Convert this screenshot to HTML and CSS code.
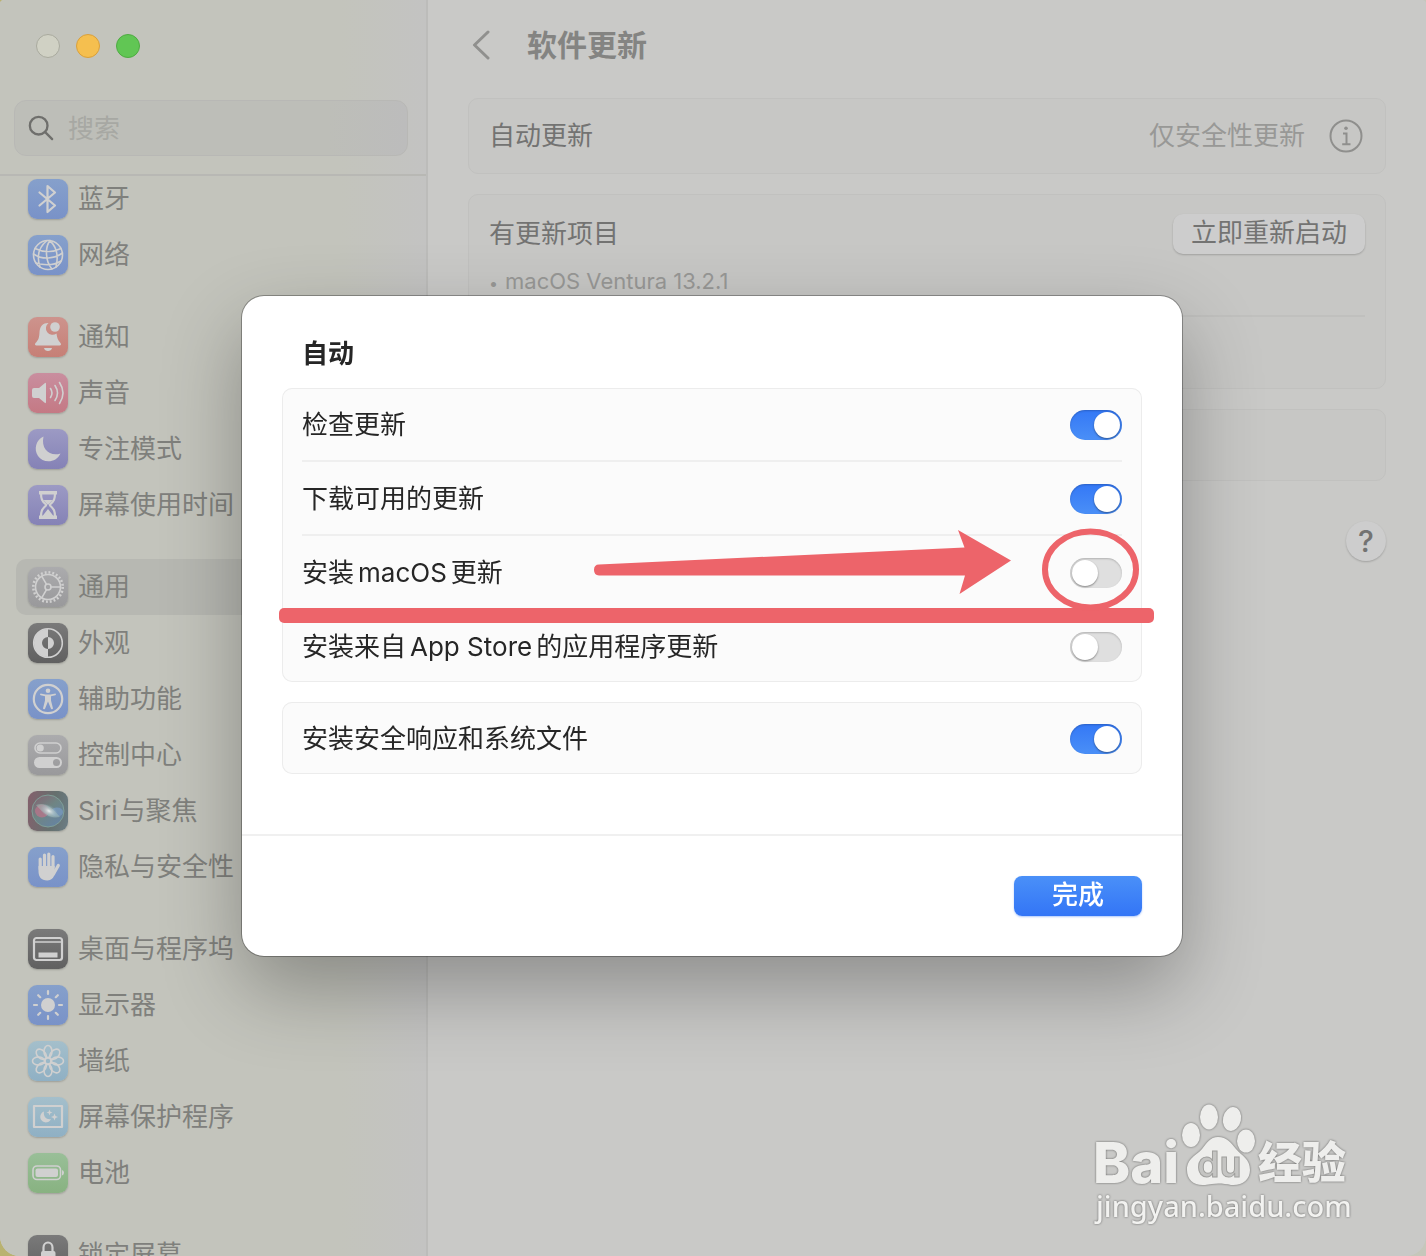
FILE: index.html
```html
<!DOCTYPE html>
<html lang="zh-CN">
<head>
<meta charset="utf-8">
<meta name="viewport" content="width=device-width, initial-scale=1">
<title>软件更新</title>
<link rel="stylesheet" href="styles.css">
</head>
<body>
<div class="window">
  <aside class="sidebar">
    <div class="sidebar-top">
      <div class="lights">
        <button class="light light-close" type="button" aria-label="关闭"></button>
        <button class="light light-min" type="button" aria-label="最小化"></button>
        <button class="light light-zoom" type="button" aria-label="缩放"></button>
      </div>
      <label class="search">
        <svg class="search-icon" viewBox="0 0 28 28" aria-hidden="true"><circle cx="11.500" cy="11.500" r="9.500"/><path d="M18.500 18.500 26 26"/></svg>
        <input type="search" placeholder="搜索" aria-label="搜索">
      </label>
    </div>
    <nav class="nav">
      <ul class="group">
        <li><a class="item" href="#"><svg class="icon blue" viewBox="0 0 40 40"><path class="line" d="M11.500 13.500 27 26.500 19.500 33V7L27 13.500 11.500 26.500"/></svg>蓝牙</a></li>
        <li><a class="item" href="#"><svg class="icon blue" viewBox="0 0 40 40"><g class="line thin"><circle cx="20" cy="20" r="14.500"/><path d="M22 5.500C17 12 17 26 24 34M21 5.500C28 10 31 20 28 32M19 5.500C11 12 8 20 12 32M7 13.500c8 4 18 4 26 0M5.500 19c9 6 21 5 29-1M8 28c7 2 17 3 25-2"/></g></svg>网络</a></li>
      </ul>
      <ul class="group">
        <li><a class="item" href="#"><svg class="icon red" viewBox="0 0 40 40"><path class="fill" d="M20 6c-5 0-8 3-8.500 9-.3 6-1 8-4 11-1 1.500-.5 2.500 1 2.500h23c1.500 0 2-1 1-2.500-2.500-2.500-3.500-5-4-9.500A6.500 6.500 0 0 1 20.500 6zM16 31h8c-.5 4-7.500 4-8 0z"/><circle class="fill" cx="27" cy="10" r="4.800"/></svg>通知</a></li>
        <li><a class="item" href="#"><svg class="icon pink" viewBox="0 0 40 40"><path class="fill" d="M4 17q0-2 2-2h5l6-5q1-.6 1 1v18q0 1.600-1 1l-6-5H6q-2 0-2-2z"/><path class="line thin" d="M22.500 15.500q3 4.500 0 9M27 12.500q5 7.500 0 15M31.500 9.500q7 10.500 0 21"/></svg>声音</a></li>
        <li><a class="item" href="#"><svg class="icon purple" viewBox="0 0 40 40"><path class="fill" d="M15.500 7.500C8 11 5.500 20 10 27c5 7.500 18 7.500 22.500-2.500-10 3.500-20-4-17-17z"/></svg>专注模式</a></li>
        <li><a class="item" href="#"><svg class="icon purple" viewBox="0 0 40 40"><path class="line" d="M13 8h14c0 6-1 8-5 11.500v1C26 24 27 26 27 32H13c0-6 1-8 5-11.500v-1C14 16 13 14 13 8z"/><path class="fill" d="M11 6h18v3.500H11zM11 30.500h18V34H11zM15.500 15h9L20 20zM20 24l5.500 7h-11z"/></svg>屏幕使用时间</a></li>
      </ul>
      <ul class="group">
        <li><a class="item selected" href="#" aria-current="page"><svg class="icon gray" viewBox="0 0 40 40"><circle class="teeth" cx="20" cy="20" r="14.700"/><g class="line thin"><circle cx="20" cy="20" r="12.500"/><circle cx="20" cy="20" r="3"/><path d="M23 20h9.500M18.500 17.400 13.700 9.200M18.500 22.600l-4.800 8.200"/></g></svg>通用</a></li>
        <li><a class="item" href="#"><svg class="icon dark" viewBox="0 0 40 40"><circle class="line thin" cx="20" cy="20" r="14.300"/><path class="fill" d="M20 6a14 14 0 0 0 0 28v-8a6 6 0 0 1 0-12zM20 14a6 6 0 0 1 0 12z"/></svg>外观</a></li>
        <li><a class="item" href="#"><svg class="icon blue" viewBox="0 0 40 40"><circle class="line" cx="20" cy="20" r="14.200"/><circle class="fill" cx="20" cy="11.800" r="2.300"/><path class="fill" d="m12.500 14.500 5 .9h5l5-.9q1.200 1.200-.2 1.800l-4.300 1v4.200l2 8q-.7 1.500-2 .2L20 22.500l-3 7.200q-1.300 1.300-2-.2l2-8v-4.200l-4.300-1q-1.400-.6-.2-1.800z"/></svg>辅助功能</a></li>
        <li><a class="item" href="#"><svg class="icon gray" viewBox="0 0 40 40"><rect class="line thin" x="7" y="8" width="26" height="10" rx="5"/><circle class="fill" cx="12.200" cy="13" r="3.600"/><path class="fill" fill-rule="evenodd" d="M11.500 22h17a5.500 5.500 0 0 1 0 11h-17a5.500 5.500 0 0 1 0-11zm17 2a3.500 3.500 0 1 0 0 7 3.500 3.500 0 0 0 0-7z"/></svg>控制中心</a></li>
        <li><a class="item" href="#"><svg class="icon siri" viewBox="0 0 40 40">
          <defs>
            <radialGradient id="glow"><stop offset="0" stop-color="#e8eef0"/><stop offset=".4" stop-color="#c8d4d8" stop-opacity=".6"/><stop offset="1" stop-color="#8fb4c4" stop-opacity="0"/></radialGradient>
            <linearGradient id="orb" x2=".8" y2="1"><stop offset="0" stop-color="#86606f"/><stop offset=".5" stop-color="#6f8584"/><stop offset="1" stop-color="#6583a3"/></linearGradient>
          </defs>
          <circle cx="20" cy="20" r="16" fill="url(#orb)" stroke="#7f9e97"/>
          <ellipse cx="14" cy="20" rx="7" ry="6.500" fill="#b5748a" opacity=".8"/>
          <ellipse cx="29" cy="21" rx="6" ry="4.500" fill="#7799bd" opacity=".8"/>
          <path d="M8 14c8-3 15 1 24 12-10 2-16-3-24-12z" fill="#a3bdb8" opacity=".5"/>
          <ellipse cx="21" cy="20" rx="10" ry="6" fill="url(#glow)" transform="rotate(30 21 20)"/></svg><span><span class="latin-start">Siri</span>与聚焦</span></a></li>
        <li><a class="item" href="#"><svg class="icon blue" viewBox="0 0 40 40"><path class="fingers" d="M12.200 22V12M16.500 20V8M20.800 20V7M25 20V9.500M25.500 27l4.800-8.500"/><path class="fill" d="M10.500 19h16.200v5l1.500-1c-2 7-4 10.500-9 10.500-6 0-8.700-4-8.700-9z"/></svg>隐私与安全性</a></li>
      </ul>
      <ul class="group">
        <li><a class="item" href="#"><svg class="icon dark" viewBox="0 0 40 40"><rect class="line" x="6" y="9" width="28" height="22" rx="2.500"/><path class="line thin" d="M7 13h26"/><path class="fill" d="M10.500 23.500h19v5h-19z"/></svg>桌面与程序坞</a></li>
        <li><a class="item" href="#"><svg class="icon blue" viewBox="0 0 40 40"><circle class="fill" cx="20" cy="20" r="7"/><path class="line" d="M20 6v3M20 31v3M6 20h3M31 20h3M10.200 10.200l2 2M27.800 27.800l2 2M10.200 29.800l2-2M27.800 12.200l2-2"/></svg>显示器</a></li>
        <li><a class="item" href="#"><svg class="icon sky" viewBox="0 0 40 40"><defs><g id="petals"><ellipse cx="20" cy="10.500" rx="4" ry="6"/><ellipse cx="20" cy="29.500" rx="4" ry="6"/></g></defs><g class="line thin"><use href="#petals"/><use href="#petals" transform="rotate(45 20 20)"/><use href="#petals" transform="rotate(90 20 20)"/><use href="#petals" transform="rotate(135 20 20)"/><circle cx="20" cy="20" r="3"/></g></svg>墙纸</a></li>
        <li><a class="item" href="#"><svg class="icon sky" viewBox="0 0 40 40"><rect class="line" x="6" y="9" width="28" height="21"/><path class="fill" d="M16 14.500a5.600 5.600 0 1 0 7 7.500c-4 1-8-2-7-7.500zM21.500 12.500l.8 2.200 2.200.8-2.200.8-.8 2.200-.8-2.200-2.200-.8 2.200-.8zM26.500 16.500l1 2.500 2.500 1-2.500 1-1 2.500-1-2.500-2.500-1 2.500-1z"/></svg>屏幕保护程序</a></li>
        <li><a class="item" href="#"><svg class="icon green" viewBox="0 0 40 40"><rect class="line thin" x="5" y="13" width="27.500" height="13.500" rx="4"/><rect class="fill" x="7.500" y="15.500" width="22.500" height="8.500" rx="2"/><path class="fill" d="M34 17q2 .5 2 2.700T34 22.500z"/></svg>电池</a></li>
      </ul>
      <ul class="group">
        <li><a class="item" href="#"><svg class="icon dark" viewBox="0 0 40 40"><path class="line" d="M15.500 18v-5.500a4.500 5 0 0 1 9 0V18"/><rect class="fill" x="13" y="16" width="14.500" height="14" rx="2"/></svg>锁定屏幕</a></li>
      </ul>
    </nav>
  </aside>

  <main class="content">
    <header class="content-head">
      <button class="back" type="button" aria-label="返回"><svg viewBox="0 0 18 30"><path d="M16 2 2.500 15 16 28"/></svg></button>
      <h1>软件更新</h1>
    </header>
    <section class="panel panel-row auto">
      <span>自动更新</span>
      <span class="status">仅安全性更新
        <button class="info" type="button" aria-label="详细信息"><svg viewBox="0 0 34 34"><circle class="ring" cx="17" cy="17" r="15.500"/><circle class="dot" cx="17" cy="9.300" r="1.800"/><path d="M14 14.500h3.500V25M13.200 25.200h8.300"/></svg></button>
      </span>
    </section>
    <section class="panel updates">
      <div class="panel-row">
        <span>有更新项目</span>
        <button class="restart" type="button">立即重新启动</button>
      </div>
      <p class="version"><span class="bullet">•</span>macOS Ventura 13.2.1</p>
    </section>
    <section class="panel spare"></section>
    <button class="help" type="button" aria-label="帮助">?</button>
  </main>

  <div class="watermark">
    <svg class="logo" viewBox="0 0 256 86" role="img" aria-label="Baidu 经验">
      <g class="logo-paint">
        <text class="logo-bai" x="-3" y="79">Bai</text>
        <ellipse cx="95" cy="31" rx="9" ry="12"/><ellipse cx="113" cy="13" rx="9" ry="12.500"/><ellipse cx="136" cy="15" rx="9" ry="12" transform="rotate(12 136 15)"/><ellipse cx="150" cy="37" rx="9" ry="11.500"/>
        <path d="M122 33c-8 0-11 6-16 12-6 7-15 9-15 21 0 10 7 16 18 15 9-2 18-2 26 0 11 1 19-5 19-15 0-11-8-14-14-21-5-6-9-12-18-12z"/>
        <text class="logo-cn" x="162" y="75">经验</text>
      </g>
      <text class="logo-du" x="101" y="73">du</text>
    </svg>
    <span class="site">jingyan.baidu.com</span>
  </div>
</div>

<div class="overlay">
  <form class="sheet" role="dialog" aria-labelledby="sheet-title">
    <div class="sheet-body">
      <h2 id="sheet-title">自动</h2>
      <div class="options">
        <label class="option">检查更新<input class="switch" type="checkbox" role="switch" checked></label>
        <label class="option">下载可用的更新<input class="switch" type="checkbox" role="switch" checked></label>
        <label class="option"><span>安装<span class="latin">macOS</span>更新</span><input class="switch" type="checkbox" role="switch"></label>
        <label class="option"><span>安装来自<span class="latin">App Store</span>的应用程序更新</span><input class="switch" type="checkbox" role="switch"></label>
      </div>
      <div class="options">
        <label class="option">安装安全响应和系统文件<input class="switch" type="checkbox" role="switch" checked></label>
      </div>
    </div>
    <footer class="sheet-foot"><button class="done" type="button">完成</button></footer>
    <svg class="marks" viewBox="0 0 940 660" aria-hidden="true">
      <path d="M357 268.500 722.500 251.500 716 234 769 264.500 717.500 298 723 279.500 357 279.500Q352 279 352 274 352 268.500 357 268.500z"/>
      <rect x="37" y="312" width="875" height="15" rx="5"/>
      <ellipse cx="848.500" cy="273.500" rx="45.500" ry="38"/>
    </svg>
  </form>
</div>
</body>
</html>
```

FILE: styles.css
```css
* { box-sizing: border-box; }

body {
  margin: 0;
  height: 100vh;
  overflow: hidden;
  background: linear-gradient(90deg, #b9b270, #c6c7bb);
  color: #737372;
  font: 26px/36px Inter, "Noto Sans CJK SC", sans-serif;
}

button, input { font: inherit; color: inherit; }
button { padding: 0; border: 0; background: none; }
h1, h2, p, ul { margin: 0; padding: 0; }
ul { list-style: none; }

.window {
  position: relative;
  display: flex;
  height: 100vh;
  overflow: hidden;
  border-radius: 4px 4px 20px 20px;
  background: #c9c9c7;
}

/* Sidebar */
.sidebar {
  display: flex;
  flex-direction: column;
  flex: none;
  width: 428px;
  border-right: 2px solid #bcbcba;
  background: linear-gradient(90deg, #c3c4bc 80%, #c3c3c2);
}

.sidebar-top {
  flex: none;
  padding: 34px 18px 18px 14px;
  border-bottom: 2px solid #b8b8b4;
}

.lights { display: flex; gap: 16px; padding: 0 22px; margin-bottom: 42px; }
.light { width: 24px; height: 24px; border: 1px solid #a9aa9e; border-radius: 50%; background: #d0d1c4; }
.light-min { border-color: #d9a03c; background: #f5bf4f; }
.light-zoom { border-color: #4fab42; background: #61c654; }

.search {
  display: flex;
  align-items: center;
  gap: 14px;
  height: 56px;
  padding: 0 13px;
  border: 1px solid #b8b8b5;
  border-radius: 12px;
  background: linear-gradient(90deg, #bdbeb8 80%, #bcbcbc);
}
.search-icon { flex: none; width: 26px; height: 26px; fill: none; stroke: #6f6f6c; stroke-width: 2.500; stroke-linecap: round; }
.search input { flex: 1; min-width: 0; padding: 2px 0 0; border: 0; outline: 0; background: none; }
.search input::placeholder { color: #a7a8a3; opacity: 1; }

.nav { flex: 1; min-height: 0; overflow: hidden; padding: 0 16px; }
.group { margin-bottom: 26px; }
.group:first-child { margin-top: -5px; }
.item {
  display: flex;
  align-items: center;
  gap: 10px;
  height: 56px;
  padding: 0 12px;
  border-radius: 10px;
  color: #7f807c;
  line-height: 38px;
  white-space: nowrap;
  text-decoration: none;
}
.item.selected { background: #b7b8b2; }

.icon { flex: none; width: 40px; height: 40px; border-radius: 9px; box-shadow: 0 1px 2px #0003; }
.icon .fill { fill: #d0d0d0; }
.icon .line { fill: none; stroke: #d0d0d0; stroke-width: 2.200; stroke-linecap: round; stroke-linejoin: round; }
.icon .thin, .icon .line.thin { stroke-width: 1.600; }
.icon .teeth { fill: none; stroke: #d0d0d0; stroke-width: 2.600; stroke-dasharray: 1.900 1.950; }
.icon .fingers { fill: none; stroke: #d0d0d0; stroke-width: 3.200; stroke-linecap: round; }
.blue { background: linear-gradient(#86a0cb, #7992c8); }
.red { background: linear-gradient(#cd938d, #c67f76); }
.pink { background: linear-gradient(#c98e9f, #c47984); }
.purple { background: linear-gradient(#9c9ac4, #8582b6); }
.gray { background: linear-gradient(#ababad, #99999b); }
.dark { background: linear-gradient(#7a7a7a, #606060); }
.sky { background: linear-gradient(#a4bfcb, #8fb0c4); }
.green { background: linear-gradient(#99bf98, #88b281); }
.siri { background: linear-gradient(100deg, #84606c, #65706e 60%, #6b7d85); }

.latin { margin: 0 4px; }
.latin-start { margin-right: 2px; }

/* Main pane */
.content { flex: 1; min-width: 0; padding: 24px 40px 0; }
.content-head { display: flex; align-items: center; gap: 36px; height: 42px; margin-bottom: 32px; padding-left: 2px; color: #848482; }
.back { width: 21px; height: 30px; line-height: 0; }
.back svg { width: 18px; height: 30px; fill: none; stroke: #90908e; stroke-width: 3; stroke-linecap: round; stroke-linejoin: round; }
.content-head h1 { font-size: 30px; font-weight: 700; line-height: 42px; }

.panel { margin-bottom: 20px; padding: 0 20px; border: 1px solid #c1c1bf; border-radius: 10px; background: #c7c7c5; }
.panel-row { display: flex; align-items: center; justify-content: space-between; }
.auto { height: 76px; }
.status { display: flex; align-items: center; gap: 24px; color: #989896; }
.info { width: 34px; height: 34px; margin-right: 2px; line-height: 0; }
.info svg { width: 34px; height: 34px; fill: none; stroke: #8f8f8d; stroke-width: 2; }
.info .dot { fill: #8f8f8d; stroke: none; }

.updates { padding-top: 19px; padding-bottom: 71px; }
.updates .panel-row { line-height: 40px; }
.restart { width: 192px; height: 40px; padding-bottom: 2px; border-radius: 10px; background: #cdcdcd; box-shadow: 0 1px 2px #0003; line-height: 38px; }
.version { height: 63px; padding-top: 9px; border-bottom: 2px solid #c0c0be; color: #989896; font-size: 22px; }
.bullet { display: inline-block; width: 16px; font-size: 16px; }
.spare { height: 72px; margin-bottom: 40px; }
.help { display: block; width: 40px; height: 40px; margin-left: auto; border-radius: 50%; background: #cdcdcd; box-shadow: 0 1px 2px #0003; font-size: 30px; font-weight: 500; }

/* Sheet */
.overlay { position: fixed; inset: 0; display: grid; place-items: center; padding: 0 2px 4px 0; }
.sheet {
  position: relative;
  width: 940px;
  max-width: 100%;
  border-radius: 22px;
  background: #fff;
  color: #262626;
  box-shadow: 0 0 0 1px #0000004d, 0 32px 80px #0000004d;
}
.sheet-body { padding: 40px 40px 60px; border-bottom: 2px solid #f0f0f0; }
.sheet h2 { padding: 0 20px; margin-bottom: 16px; font-size: 26px; font-weight: 700; line-height: 36px; }
.options { padding: 0 20px; border-radius: 10px; background: #fbfbfb; box-shadow: inset 0 0 0 1px #ececec; }
.options + .options { margin-top: 20px; }
.option { display: flex; align-items: center; justify-content: space-between; height: 72px; padding-top: 2px; line-height: 38px; }
.option + .option { height: 74px; border-top: 2px solid #efefef; }

.switch {
  appearance: none;
  flex: none;
  width: 52px;
  height: 30px;
  margin: 0;
  padding: 2px;
  border-radius: 15px;
  background: #dfdfdf;
  box-shadow: inset 0 1px 2px #0003;
}
.switch::before { content: ""; display: block; width: 26px; height: 26px; border-radius: 50%; background: #fff; box-shadow: 0 1px 2px #0006; }
.switch:checked { background: linear-gradient(#3478f6, #4a8ff7); }
.switch:checked::before { margin-left: auto; }

.sheet-foot { display: flex; justify-content: flex-end; padding: 40px; }
.done { width: 128px; height: 40px; padding-bottom: 2px; border-radius: 8px; background: linear-gradient(#4a90f8, #3375f6); box-shadow: 0 1px 2px #3375f666; color: #fff; font-weight: 500; line-height: 38px; }

.marks { position: absolute; inset: 0; width: 100%; height: 100%; fill: #ed646a; pointer-events: none; }
.marks ellipse { fill: none; stroke: #ed646a; stroke-width: 6; }

/* Watermark */
.watermark { position: absolute; right: 74px; bottom: 34px; display: flex; flex-direction: column; width: 256px; color: #f2f2f0; filter: drop-shadow(0 0 1px #00000080); }
.logo { display: block; width: 256px; height: 86px; overflow: visible; }
.logo-paint { fill: #eeeeec; }
.logo-bai { font: 800 56px Inter, sans-serif; }
.logo-cn { font: 900 44px "Noto Sans CJK SC", sans-serif; }
.logo-du { font: 600 36px Inter, sans-serif; fill: #c4c4c2; stroke: #a0a09e; stroke-width: 1; }
.site { font: 500 29px/32px "Noto Sans", sans-serif; white-space: nowrap; }
```
